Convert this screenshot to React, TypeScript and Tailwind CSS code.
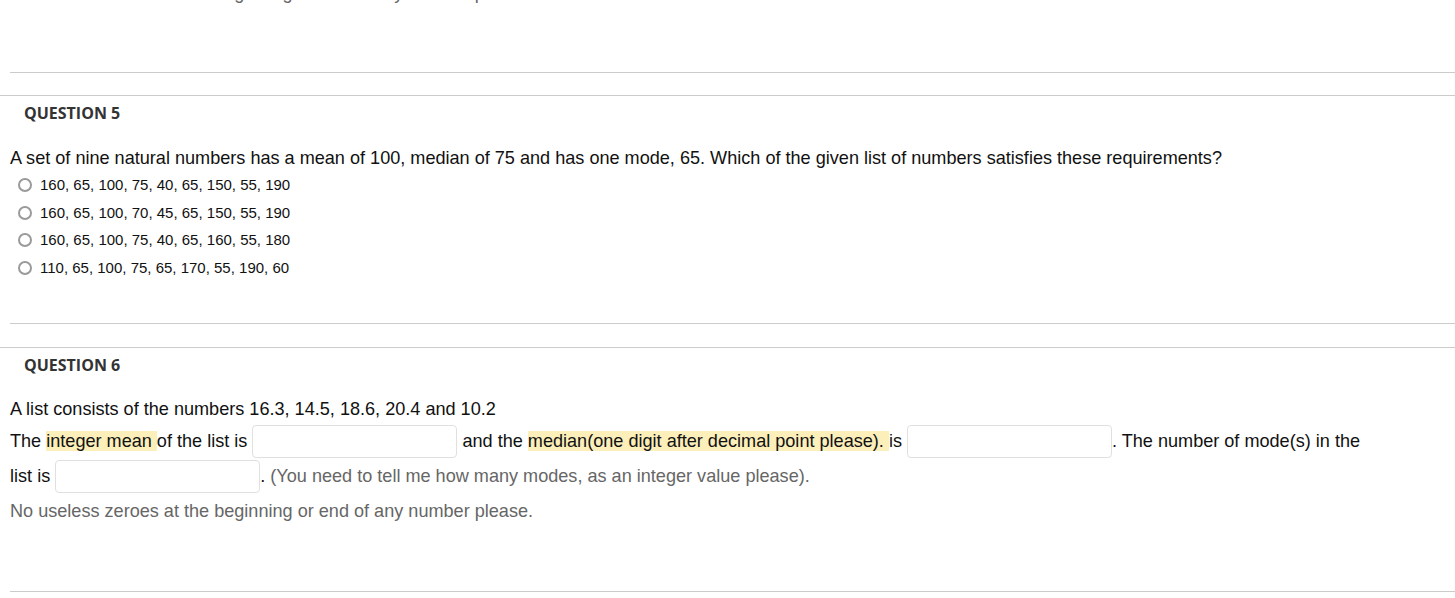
import React from "react";

const sans = { fontFamily: '"Liberation Sans", Arial, sans-serif' };

function Radio({ label }: { label: string }) {
  return (
    <div className="flex items-center h-[27.6px] pl-[18px]">
      <span className="inline-block w-[14px] h-[14px] rounded-full border-2 border-[#9a9a9a] bg-white" />
      <span className="ml-[8px] text-[15px] leading-[20px] text-[#111]">{label}</span>
    </div>
  );
}

function Input() {
  return (
    <input
      type="text"
      className="inline-block align-middle w-[205px] h-[33px] rounded-[4px] border border-[#e0e0e0] bg-white outline-none"
    />
  );
}

function Hl({ children }: { children: React.ReactNode }) {
  return <span className="bg-[#fcefba]">{children}</span>;
}

export default function App() {
  return (
    <div className="w-[1455px] h-[598px] overflow-hidden bg-white" style={sans}>
      <p className="mt-[-18px] pl-[10px] text-[18.1px] leading-[22px] text-[#666]">
        No useless zeroes at the beginning or end of any number please.
      </p>
      <div className="mt-[68px] ml-[10px] h-px bg-[#cccccc]" />

      {/* Question 5 */}
      <div className="mt-[22px] border-t border-[#cccccc]">
        <h3
          className="mt-[7px] pl-[24px] text-[16px] leading-[20px] font-bold text-[#333]"
          style={{ fontFamily: '"Open Sans", sans-serif' }}
        >
          QUESTION 5
        </h3>
        <p className="mt-[24px] pl-[10px] text-[18.1px] leading-[22px] text-[#111]">
          A set of nine natural numbers has a mean of 100, median of 75 and has one mode, 65. Which of the given list of numbers satisfies these requirements?
        </p>
        <div className="mt-[2.2px]">
          <Radio label="160, 65, 100, 75, 40, 65, 150, 55, 190" />
          <Radio label="160, 65, 100, 70, 45, 65, 150, 55, 190" />
          <Radio label="160, 65, 100, 75, 40, 65, 160, 55, 180" />
          <Radio label="110, 65, 100, 75, 65, 170, 55, 190, 60" />
        </div>
      </div>
      <div className="mt-[41.6px] ml-[10px] h-px bg-[#cccccc]" />

      {/* Question 6 */}
      <div className="mt-[23px] border-t border-[#cccccc]">
        <h3
          className="mt-[7px] pl-[24px] text-[16px] leading-[20px] font-bold text-[#333]"
          style={{ fontFamily: '"Open Sans", sans-serif' }}
        >
          QUESTION 6
        </h3>
        <p className="mt-[23px] pl-[10px] text-[18.1px] leading-[22px] text-[#111]">
          A list consists of the numbers 16.3, 14.5, 18.6, 20.4 and 10.2
        </p>
        <div className="mt-[3.5px] ml-[10px] w-[1365px] text-[18.1px] leading-[35px] text-[#111]">
          The <Hl>integer mean </Hl>of the list is <Input /> and the{" "}
          <Hl>median(one digit after decimal point please). </Hl>is <Input />. The number of mode(s) in the list is{" "}
          <Input />. <span className="text-[#666]">(You need to tell me how many modes, as an integer value please).</span>
        </div>
        <p className="mt-[6.5px] pl-[10px] text-[18.1px] leading-[22px] text-[#666]">
          No useless zeroes at the beginning or end of any number please.
        </p>
      </div>
      <div className="mt-[69px] ml-[10px] h-px bg-[#cccccc]" />
    </div>
  );
}
